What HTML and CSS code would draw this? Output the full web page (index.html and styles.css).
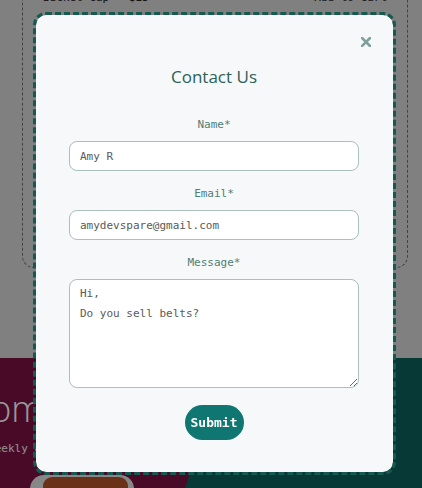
FILE: index.html
```html
<!DOCTYPE html>
<html lang="en">
<head>
<meta charset="utf-8">
<title>Contact Us</title>
<link rel="stylesheet" href="styles.css">
</head>
<body>
<div class="page">
  <div class="product">
    <div class="product-row">
      <span>Bucket Cap - $25</span>
      <span>♡ Add to cart</span>
    </div>
  </div>
  <section class="promo">
    <h2 class="promo-title">Welcome</h2>
    <p class="promo-text">Shop weekly deals</p>
    <div class="promo-pill"><span class="promo-btn"></span></div>
  </section>
</div>

<div class="overlay">
  <form class="modal">
    <svg class="close" width="10" height="10" viewBox="0 0 10 10" aria-label="Close">
      <path d="M1 1 L9 9 M9 1 L1 9" stroke="#7fa09b" stroke-width="2.6" stroke-linecap="square" fill="none"/>
    </svg>
    <h2 class="modal-title">Contact Us</h2>
    <label class="field-label" for="name">Name*</label>
    <input class="field" id="name" type="text" value="Amy R">
    <label class="field-label" for="email">Email*</label>
    <input class="field" id="email" type="email" value="amydevspare@gmail.com">
    <label class="field-label" for="msg">Message*</label>
    <textarea class="field area" id="msg">Hi,
Do you sell belts?</textarea>
    <div class="actions">
      <button class="submit" type="button">Submit</button>
    </div>
  </form>
</div>
</body>
</html>
```

FILE: styles.css
```css
html, body {
  margin: 0;
  height: 100%;
  overflow: hidden;
}

body {
  background: #d5d5d5;
  font-family: "Open Sans", sans-serif;
}

.product {
  margin: -10px 14px 0 22px;
  height: 278px;
  box-sizing: border-box;
  border: 1px dashed #6e6e6e;
  border-top: none;
  border-radius: 0 0 12px 12px;
  padding: 0 20px;
}

.product-row {
  display: flex;
  justify-content: space-between;
  font-family: "DejaVu Sans Mono", monospace;
  font-size: 11px;
  line-height: 16px;
  color: #222;
}

.promo {
  margin-top: 90px;
  height: 140px;
  overflow: hidden;
  background: linear-gradient(108.4deg, #7b1143 216.6px, #0d615d 216.6px);
}

.promo-title {
  margin: 31px 0 0 -87px;
  font-size: 36px;
  font-weight: 300;
  line-height: 40px;
  color: #fff;
  white-space: nowrap;
}

.promo-text {
  margin: 12px 0 0 -45px;
  font-family: "DejaVu Sans Mono", monospace;
  font-size: 11px;
  line-height: 16px;
  color: #f2f2f2;
  white-space: nowrap;
}

.promo-pill {
  margin: 18px 0 0 30px;
  width: 104px;
  height: 40px;
  box-sizing: border-box;
  padding: 2px 6px 0 13px;
  background: #e2e2e2;
  border-radius: 14px;
}

.promo-btn {
  display: block;
  width: 85px;
  height: 30px;
  background: #b25028;
  border-radius: 9px;
}

.overlay {
  position: fixed;
  inset: 0;
  background: rgba(0, 0, 0, 0.4);
  display: flex;
  align-items: flex-start;
  padding: 15px 0 0 36px;
  box-sizing: border-box;
}

.modal {
  position: relative;
  width: 357px;
  box-sizing: border-box;
  padding: 50px 34px 32px 33px;
  background: #f6f8fa;
  border-radius: 10px;
  outline: 3px dashed #145a50;
  display: flex;
  flex-direction: column;
}

.close {
  position: absolute;
  top: 22px;
  right: 22px;
}

.modal-title {
  margin: 0 0 28px;
  text-align: center;
  font-size: 17px;
  font-weight: 500;
  line-height: 24px;
  color: #2c6158;
}

.field-label {
  display: block;
  text-align: center;
  font-family: "DejaVu Sans Mono", monospace;
  font-size: 11px;
  line-height: 16px;
  color: #4f7f76;
  margin-bottom: 8px;
}

.field {
  display: block;
  width: 100%;
  height: 30px;
  box-sizing: border-box;
  margin: 0 0 15px;
  padding: 0 10px;
  border: 1px solid #a9c0bb;
  border-radius: 8px;
  background: #fff;
  font-family: "DejaVu Sans Mono", monospace;
  font-size: 11px;
  color: #5a5a5a;
  outline: none;
}

.area {
  height: 109px;
  margin-bottom: 17px;
  padding: 4px 10px;
  line-height: 20px;
  resize: vertical;
  overflow: hidden;
}

.actions {
  display: flex;
  justify-content: center;
}

.submit {
  width: 59px;
  height: 35px;
  padding: 0;
  border: none;
  border-radius: 18px;
  background: #0f7671;
  color: #fff;
  font-family: "DejaVu Sans Mono", monospace;
  font-size: 13px;
  font-weight: 600;
}
```
